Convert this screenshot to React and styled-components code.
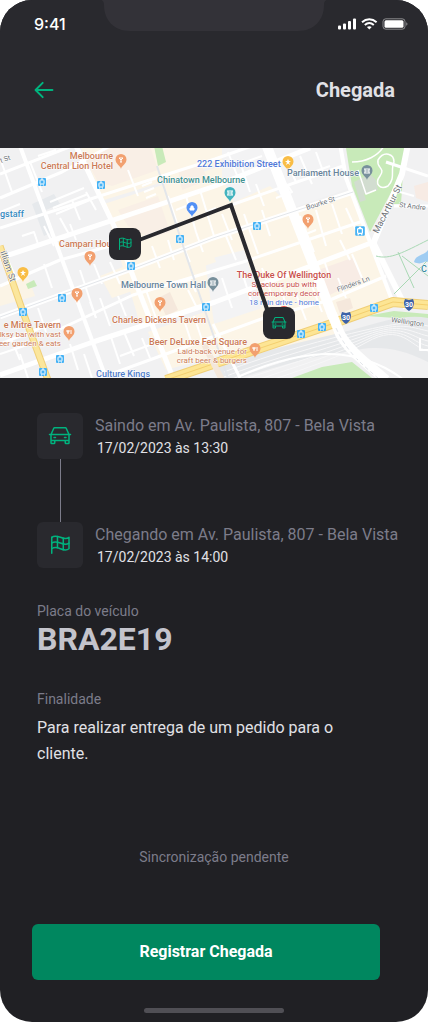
import React from "react";
import styled, { createGlobalStyle } from "styled-components";
import { PiCar } from "react-icons/pi";

const color = {
  white: "#ffffff",
  gray100: "#e1e1e6",
  gray200: "#c4c4cc",
  gray400: "#7c7c8a",
  gray700: "#29292e",
  gray800: "#202024",
  notch: "#333238",
  indicator: "#504f55",
  brandLight: "#00b37e",
  brandMid: "#00875f",
};

const GlobalStyle = createGlobalStyle`
  * { box-sizing: border-box; }
  body {
    margin: 0;
    background: ${color.white};
    font-family: Roboto, "Liberation Sans", sans-serif;
  }
  h1, h2, p, ol, dl, dd { margin: 0; padding: 0; }
`;

const Screen = styled.div`
  display: flex;
  flex-direction: column;
  min-height: 100vh;
  overflow: hidden;
  border-radius: 32px;
  background: ${color.gray800};
`;

const Header = styled.header`
  background: ${color.gray700};
`;

const StatusBar = styled.div`
  display: grid;
  grid-template-columns: 1fr 228px 1fr;
  height: 47px;
`;

const Clock = styled.time`
  align-self: center;
  padding-left: 34px;
  color: ${color.white};
  font: 500 16px/20px Inter, sans-serif;
`;

const Notch = styled.svg`
  display: block;
  width: 228px;
  height: 31px;
`;

const StatusIcons = styled.svg`
  align-self: center;
  justify-self: end;
  width: 70px;
  height: 12px;
  margin-right: 20px;
`;

const NavBar = styled.div`
  display: flex;
  align-items: center;
  justify-content: space-between;
  padding: 31px 33px 46px 32px;
`;

const BackButton = styled.button`
  display: flex;
  padding: 0;
  border: 0;
  background: none;
  color: ${color.brandLight};
  cursor: pointer;
`;

const Title = styled.h1`
  color: ${color.gray100};
  font-size: 20px;
  line-height: 24px;
  font-weight: 700;
`;

const MapView = styled.svg`
  display: block;
  width: 100%;
  height: 230px;
  background: #f1f1f2;
  font-family: Roboto, sans-serif;
`;

const Content = styled.main`
  display: flex;
  flex-direction: column;
  flex: 1;
`;

const Timeline = styled.ol`
  padding: 35px 16px 0 37px;
  list-style: none;
`;

const Stop = styled.li`
  display: flex;
  align-items: center;
  gap: 12px;
`;

const StopIcon = styled.span`
  display: flex;
  align-items: center;
  justify-content: center;
  flex: none;
  width: 46px;
  height: 46px;
  border-radius: 6px;
  background: ${color.gray700};
  color: ${color.brandLight};
`;

const Connector = styled.li`
  width: 1px;
  height: 63px;
  margin-left: 23px;
  background: ${color.gray400};
`;

const StopAddress = styled.p`
  color: ${color.gray400};
  font-size: 16px;
  line-height: 24px;
`;

const StopDate = styled.p`
  padding-left: 2px;
  color: ${color.gray100};
  font-size: 14px;
  line-height: 20px;
`;

const Details = styled.dl`
  padding: 33px 48px 0 37px;
`;

const Label = styled.dt`
  color: ${color.gray400};
  font-size: 14px;
  line-height: 20px;
`;

const Plate = styled.dd`
  && { margin-bottom: 32px; }
  color: ${color.gray200};
  font-size: 32px;
  line-height: 36px;
  font-weight: 700;
`;

const Purpose = styled.dd`
  && { margin-top: 6px; }
  color: ${color.gray100};
  font-size: 16px;
  line-height: 26px;
`;

const SyncStatus = styled.p`
  && { margin-top: 80px; }
  color: ${color.gray400};
  font-size: 14px;
  line-height: 20px;
  text-align: center;
`;

const Footer = styled.footer`
  display: flex;
  padding: 57px 48px 28px 32px;
`;

const PrimaryButton = styled.button`
  flex: 1;
  height: 56px;
  border: 0;
  border-radius: 6px;
  background: ${color.brandMid};
  color: ${color.white};
  font: 700 16px/24px Roboto, sans-serif;
  cursor: pointer;
`;

const HomeIndicator = styled.div`
  align-self: center;
  width: 140px;
  height: 5px;
  margin-bottom: 9px;
  border-radius: 3px;
  background: ${color.indicator};
`;

/* ---------- Icons ---------- */

function ArrowLeftIcon({ size, ...rest }) {
  return (
    <svg
      width={size} height={size} viewBox="0 0 256 256" fill="none" stroke="currentColor"
      strokeWidth="21" strokeLinecap="round" strokeLinejoin="round" aria-hidden="true" {...rest}
    >
      <path d="M218 128H40 M114 52L38 128L114 204" />
    </svg>
  );
}

function FlagIcon({ size, ...rest }) {
  return (
    <svg
      width={size} height={size} viewBox="0 0 256 256" fill="none" stroke="currentColor"
      strokeWidth="16" strokeLinecap="round" strokeLinejoin="round" aria-hidden="true" {...rest}
    >
      <path d="M40 216V46" />
      <path d="M40 168C104 120 160 216 224 168V46C160 94 104 -2 40 46" />
      <path d="M40 107C104 59 160 155 224 107" />
      <path d="M101 36V158 M163 57V179" />
    </svg>
  );
}

/* ---------- Map data ---------- */

const blocks = [
  ["#fcf5e7", "M80 -2 H255 L232 12 L150 38 L104 52 Z"],
  ["#fcf5e7", "M104 56 L215 20 L268 -2 L340 196 L225 215 L206 160 L140 176 Z"],
  ["#f3f3f4", "M222 0 H340 L350 40 L292 60 L270 38 L234 54 L222 30 Z"],
  ["#f3f3f4", "M205 112 L244 102 L262 160 L214 176 Z"],
  ["#fcf5e7", "M292 62 L352 42 L390 150 L330 172 Z"],
  ["#f9efe6", "M84 8 L120 -2 H150 L158 22 L112 38 L98 34 Z"],
  ["#f9efe6", "M118 62 L158 48 L170 84 L150 90 L128 78 Z"],
  ["#f8ece5", "M318 122 L352 110 L362 130 L328 148 Z"],
  ["#f9efe6", "M178 22 L200 14 L208 32 L182 42 Z"],
  ["#f5e8dc", "M158 150 L170 144 L178 162 L166 168 Z"],
  ["#f5e8dc", "M336 154 L350 150 L353 160 L340 166 Z"],
  ["#e6e9ec", "M32 56 L54 46 L60 56 L46 62 L52 84 L44 88 Z"],
  ["#fbf4e6", "M0 138 L28 128 L35 148 L0 158 Z"],
  ["#fcf5e7", "M100 128 L206 86 L216 114 L112 150 Z"],
  ["#fcf5e7", "M148 184 L210 162 L224 206 L166 222 Z"],
  ["#f7ebe4", "M414 38 L428 34 V54 L416 50 Z"],
];

const parks = [
  "M154 -2 H162 L166 14 L158 18 Z",
  "M346 0 H405 L402 24 L370 84 L352 38 Z",
  "M395 38 L403 26 L401 56 L390 56 Z",
  "M26 136 L34 132 L37 138 L28 141 Z",
  "M292 230 L322 219 L352 214 L372 230 Z",
  "M366 168 L394 163 L428 166 V177 L396 170 Z",
];

const railYard = "M218 218 C264 202 318 190 352 182 C385 173 405 166 428 170 V214 C392 196 372 198 340 205 C296 211 262 224 240 230 H222 Z";
const rails = [0, 5, 10, 15, 20, 25];

const streets = [
  [5, "M0 110 L215 38 L310 0"],
  [3, "M0 80 L215 11 L252 -2"],
  [3, "M0 50 L62 24 L110 -2"],
  [3, "M132 94 L231 57 L343 18"],
  [5, "M0 169 L60 147 L132 121 L213 90 L353 44"],
  [3, "M0 26 L72 -2"],
  [3, "M0 138 L60 112 L110 98"],
  [3, "M60 181 L133 147 L243 114 L363 73"],
  [5, "M0 227 L90 195 L215 154 L316 116 L376 93"],
  [3, "M0 196 L60 172"],
  [3, "M100 230 L166 206 L264 170 L330 152"],
  [3, "M330 152 L386 128"],
  [4, "M20 -2 L63 114 L106 230"],
  [5, "M76 -2 L115 80 L133 128 L173 230"],
  [10, "M266 -4 L313 116 L334 172"],
  [4, "M340 -4 L346 30 L376 110 L392 152"],
  [6, "M408 -4 L402 26 L373 96"],
  [3, "M386 14 L428 28"],
  [3, "M394 58 H428"],
  [3, "M213 176 L240 230"],
  [6, "M374 96 L406 160"],
  [2, "M0 10 L12 44"],
];

const alleys = [
  "M50 54 L84 40", "M53 60 L88 46", "M56 66 L90 52", "M72 52 L80 72", "M60 70 L70 88",
  "M86 44 L96 62", "M22 88 L34 84 L38 96", "M44 78 L54 98", "M70 76 L76 92", "M128 22 L138 48",
  "M142 38 L152 34", "M144 44 L154 40", "M146 50 L156 46", "M168 48 L178 78", "M176 62 L186 58",
  "M186 48 L196 84", "M200 42 L214 88", "M206 64 L216 60", "M196 84 L203 104", "M222 66 L232 92",
  "M152 98 L160 120", "M168 92 L174 112", "M182 96 L190 114", "M226 88 L236 112", "M244 66 L258 106",
  "M262 62 L270 88", "M228 4 L238 30", "M240 16 L262 8", "M242 20 L250 44", "M256 36 L264 58",
  "M276 50 L292 44 L288 38", "M286 12 L296 34", "M300 8 L312 36", "M316 4 L324 26", "M302 28 L330 18",
  "M300 68 L314 104", "M316 62 L326 98", "M332 56 L342 86", "M346 60 L356 82", "M306 86 L316 82",
  "M312 138 L322 164", "M338 130 L346 150", "M352 106 L362 130", "M340 92 L350 112", "M324 112 L330 130",
  "M280 138 L292 176", "M296 146 L306 172", "M222 130 L232 160", "M242 124 L252 156", "M262 120 L272 148",
  "M44 116 L52 140", "M80 122 L96 170", "M94 116 L102 136", "M110 114 L120 136", "M38 160 L46 184",
  "M100 150 L110 178", "M90 154 L96 170", "M118 148 L126 168", "M146 142 L156 170", "M176 136 L190 132 L196 144",
  "M188 142 L198 162", "M70 196 L78 222", "M84 206 L92 230", "M20 206 L28 230", "M10 188 L20 212",
  "M110 186 L120 216", "M124 184 L134 208", "M142 190 L150 210", "M184 172 L192 196", "M194 168 L202 192",
  "M0 206 L30 196", "M120 208 L158 194", "M8 112 L16 130", "M30 14 L42 44", "M38 8 L56 2",
  "M400 28 L400 44 L414 48", "M420 190 V202 H428", "M0 64 L20 56",
];

const parkPaths = [
  "M352 14 C366 14 378 8 384 -2",
  "M378 12 C384 2 394 6 394 14 C390 22 396 30 388 38 C380 42 374 36 380 28 C386 20 376 20 378 12 Z",
  "M358 22 L366 46 L376 42",
];

const trams = [
  [42, 34], [101, 37], [180, 91], [131, 118], [257, 78], [62, 150], [23, 164],
  [60, 211], [43, 224], [206, 159], [301, 186], [322, 179], [374, 160],
];

const ORANGE = "#f2a06f";
const pins = [
  [121, 12, ORANGE, "bar"], [90, 109, ORANGE, "bar"], [77, 146, ORANGE, "bar"], [160, 155, ORANGE, "bar"],
  [308, 72, ORANGE, "bar"], [69, 184, ORANGE, "food"], [255, 201, ORANGE, "food"],
  [288, 14, "#f9bd45", "star"], [23, 125, "#f9bd45", "star"], [192, 60, "#5290f5", "lock"],
  [230, 45, "#42b3bf", "gate"], [367, 23, "#78909c", "gate"], [213, 135, "#78909c", "gate"],
];

const FOOD = "#cb7a55";
const RED = "#c9504a";
const SLATE = "#67839a";
const BLUE = "#5179d8";
const places = [
  { x: 113, y: 11, a: "end", c: FOOD, t: "Melbourne" },
  { x: 113, y: 21, a: "end", c: FOOD, t: "Central Lion Hotel" },
  { x: 197, y: 19, c: BLUE, t: "222 Exhibition Street" },
  { x: 157, y: 35, c: "#43908f", t: "Chinatown Melbourne" },
  { x: 287, y: 28, c: SLATE, t: "Parliament House" },
  { x: 0, y: 69, c: "#3589c0", t: "gstaff" },
  { x: 59, y: 99, c: FOOD, t: "Campari House" },
  { x: 121, y: 140, c: SLATE, t: "Melbourne Town Hall" },
  { x: 112, y: 175, c: FOOD, t: "Charles Dickens Tavern" },
  { x: 61, y: 180, a: "end", c: FOOD, t: "e Mitre Tavern" },
  { x: 61, y: 189, a: "end", c: FOOD, s: 8, t: "lksy bar with vast" },
  { x: 61, y: 198, a: "end", c: FOOD, s: 8, t: "eer garden & eats" },
  { x: 247, y: 197, a: "end", c: FOOD, t: "Beer DeLuxe Fed Square" },
  { x: 247, y: 206, a: "end", c: FOOD, s: 8, t: "Laid-back venue for" },
  { x: 247, y: 215, a: "end", c: FOOD, s: 8, t: "craft beer & burgers" },
  { x: 96, y: 229, c: "#4f7cc8", t: "Culture Kings" },
  { x: 284, y: 130, a: "middle", c: RED, t: "The Duke Of Wellington" },
  { x: 284, y: 139, a: "middle", c: RED, s: 8, t: "Spacious pub with" },
  { x: 284, y: 148, a: "middle", c: RED, s: 8, t: "contemporary decor" },
  { x: 284, y: 157, a: "middle", c: BLUE, s: 8, t: "18 min drive - home" },
  { x: 421, y: 124, c: "#3589a0", t: "C" },
];

const roadNames = [
  { x: 1, y: 15, r: -20, s: 7, t: "t St" },
  { x: 0, y: 104, r: 71, s: 9, t: "illiam St" },
  { x: 307, y: 62, r: -18, s: 7, t: "Bourke St" },
  { x: 378, y: 86, r: -63, s: 9, t: "MacArthur St" },
  { x: 399, y: 59, r: 7, s: 7, t: "St Andre" },
  { x: 338, y: 144, r: -20, s: 7, t: "Flinders Ln" },
  { x: 391, y: 174, r: 8, s: 7, t: "Wellington" },
];

const glyphs = {
  bar: <path d="M-2 -2 H2 L0 0 Z M0 0 V2 M-1 2 H1" />,
  food: <path d="M-1 -2 V2 M-2 -2 V0 H0 V-2 M2 2 V-2" />,
  star: <path fill="#fff" stroke="none" d="M0 -3 L1 -1 L3 -1 L1 .6 L2 3 L0 1.4 L-2 3 L-1 .6 L-3 -1 L-1 -1 Z" />,
  lock: <path fill="#fff" d="M-2 0 H2 V2 H-2 Z M-1 0 V-2 H1 V0" />,
  gate: <path d="M-3 -2 H3 M-2 0 H2 M-2 -2 V2 M2 -2 V2 M-3 2 H3" />,
};

function PlacePin({ x, y, fill, glyph }) {
  return (
    <g transform={`translate(${x} ${y})`}>
      <path fill={fill} d="M0 9 C-.6 5.500 -5.500 4 -5.500 -.5 A5.500 5.500 0 0 1 5.500 -.5 C5.500 4 .6 5.500 0 9 Z" />
      <g fill="none" stroke="#fff" strokeWidth="1">{glyphs[glyph]}</g>
    </g>
  );
}

function TramStop({ x, y, big }) {
  return (
    <g transform={`translate(${x} ${y}) scale(${big ? 1.2 : 1})`}>
      <rect x="-4" y="-4" width="8" height="8" rx="1" fill="#45b2f5" />
      <rect x="-2" y="-2" width="4" height="4" rx=".6" fill="none" stroke="#fff" />
      <path d="M-1 -3 H1 M-2 3 H-1 M1 3 H2" stroke="#fff" />
    </g>
  );
}

function RouteShield({ x, y }) {
  return (
    <g transform={`translate(${x} ${y})`}>
      <path d="M-4 -6 L0 -5 L4 -6 L5 -3 C5 2 3 4 0 6 C-3 4 -5 2 -5 -3 Z" fill="#3c61a8" />
      <text y="2" textAnchor="middle" fontSize="7" fontWeight="700" fill="#fff">30</text>
    </g>
  );
}

function RouteMarker({ x, y, Icon }) {
  return (
    <g>
      <rect x={x} y={y} width="32" height="32" rx="8" fill={color.gray700} />
      <Icon x={x + 8} y={y + 8} size={16} color={color.brandLight} />
    </g>
  );
}

function RouteMap() {
  return (
    <MapView viewBox="0 0 428 230" preserveAspectRatio="xMidYMid slice" role="img" aria-label="Mapa do trajeto">
      {blocks.map(([fill, d]) => <path key={d} d={d} fill={fill} />)}
      {parks.map((d) => <path key={d} d={d} fill="#c8eab9" />)}
      <path d="M354 34 L362 30 L370 26 L376 32 L378 42 L364 46 L366 52 L360 54 Z" fill="#d2ddd0" />
      <path d={railYard} fill="#e6e8ea" />
      <g fill="none" stroke="#f7f7f8" strokeWidth="1">
        {rails.map((n) => (
          <path key={n} d={`M224 ${224 + n} C270 ${206 + n} 330 ${190 + n} 366 ${182 + n / 2} S410 ${174 + n} 428 ${178 + n}`} />
        ))}
      </g>
      <g fill="none" stroke="#fff" strokeLinejoin="round">
        <g strokeWidth="2">{alleys.map((d) => <path key={d} d={d} />)}</g>
        {streets.map(([w, d]) => <path key={d} d={d} strokeWidth={w} />)}
        <g strokeWidth="1.500">{parkPaths.map((d) => <path key={d} d={d} />)}</g>
      </g>
      <g fill="none" stroke="#e3e6ea">
        <path d="M0 169 L60 147 L132 121 L213 90 L353 44" />
        <path d="M157 18 L187 110 L228 230" strokeWidth="2" />
      </g>
      <g fill="none" stroke="#a9d8b4">
        <path d="M376 108 C390 112 404 104 428 92 M398 104 L414 140 M394 146 L428 112 M402 108 L428 128" />
      </g>
      <path d="M414 114 C416 106 424 108 428 102 V114 C424 112 422 118 414 114 Z" fill="#9fccf2" />
      <g fill="none" strokeLinejoin="round">
        <path d="M0 98 L23 164 L48 232" stroke="#f0cf78" strokeWidth="7" />
        <path d="M0 98 L23 164 L48 232" stroke="#fbe69c" strokeWidth="5" />
        <path d="M166 232 L213 216 L323 179 L393 154 L428 157" stroke="#f0cf78" strokeWidth="10" />
        <path d="M166 232 L213 216 L323 179 L393 154 L428 157" stroke="#fde594" strokeWidth="8" />
        <path d="M166 232 L213 216 L323 179 L393 154 L428 157" stroke="#f3cf70" strokeWidth="1" />
        <path d="M332 166 L340 186 C350 204 368 216 386 232" stroke="#fff" strokeWidth="10" />
        <path d="M336 180 C348 206 362 216 380 232" stroke="#e3e6ea" strokeDasharray="4 3" />
        <path d="M240 228 C280 210 320 202 350 208 S396 226 404 232" stroke="#fff" strokeWidth="2" />
        <path d="M204 196 L222 232" stroke="#f3e7da" strokeWidth="6" />
      </g>

      {trams.map(([x, y]) => <TramStop key={`${x}-${y}`} x={x} y={y} />)}
      <TramStop x={360} y={83} big />
      <RouteShield x={346} y={170} />
      <RouteShield x={409} y={157} />
      {pins.map(([x, y, fill, glyph]) => <PlacePin key={`${x}-${y}`} x={x} y={y} fill={fill} glyph={glyph} />)}
      <circle cx="284" cy="165" r="7" fill="#e04a3f" />

      <g fill="#6b7075" stroke="#fff" strokeWidth="1" paintOrder="stroke" strokeLinejoin="round">
        {roadNames.map((n) => (
          <text key={n.t} transform={`translate(${n.x} ${n.y}) rotate(${n.r})`} fontSize={n.s}>{n.t}</text>
        ))}
      </g>
      <g stroke="#fff" strokeWidth="1" paintOrder="stroke" strokeLinejoin="round">
        {places.map((p) => (
          <text key={p.t} x={p.x} y={p.y} textAnchor={p.a || "start"} fill={p.c} fontSize={p.s || 9} fontWeight={p.s ? 400 : 500}>
            {p.t}
          </text>
        ))}
      </g>

      <path d="M139 92 L231 57 L268 164" fill="none" stroke={color.gray700} strokeWidth="4" />
      <RouteMarker x={109} y={80} Icon={FlagIcon} />
      <RouteMarker x={263} y={159} Icon={PiCar} />
    </MapView>
  );
}

function TimelineStop({ Icon, address, date }) {
  return (
    <Stop>
      <StopIcon><Icon size={24} /></StopIcon>
      <div>
        <StopAddress>{address}</StopAddress>
        <StopDate>{date}</StopDate>
      </div>
    </Stop>
  );
}

export default function App() {
  return (
    <>
      <GlobalStyle />
      <Screen>
        <Header>
          <StatusBar>
            <Clock>9:41</Clock>
            <Notch viewBox="0 0 228 31" aria-hidden="true">
              <path d="M0 0 H228 C225 0 224 2 224 5 C224 20 214 31 198 31 H30 C14 31 4 20 4 5 C4 2 3 0 0 0 Z" fill={color.notch} />
            </Notch>
            <StatusIcons viewBox="0 0 70 12" aria-hidden="true">
              <g fill="#fff">
                <rect x="0" y="7.500" width="3" height="4" rx="1" />
                <rect x="5" y="5.500" width="3" height="6" rx="1" />
                <rect x="10" y="3" width="3" height="8.500" rx="1" />
                <rect x="15" y="0.500" width="3" height="11" rx="1" />
              </g>
              <g fill="none" stroke="#fff" strokeWidth="2">
                <path d="M24 4.200 C28.300 .4 34.300 .4 38.600 4.200" />
                <path d="M26.800 7 C29.500 4.700 33.100 4.700 35.800 7" />
              </g>
              <path d="M31.300 11.500 L28.900 9.100 C30.300 7.900 32.300 7.900 33.700 9.100 Z" fill="#fff" />
              <rect x="45" y=".8" width="22" height="10.400" rx="2.800" fill="none" stroke="#fff" strokeOpacity=".45" />
              <rect x="46.500" y="2.200" width="19" height="7.600" rx="1.500" fill="#fff" />
              <path d="M68.300 4.200 C69.800 4.800 69.800 7.200 68.300 7.800 Z" fill="#fff" fillOpacity=".5" />
            </StatusIcons>
          </StatusBar>
          <NavBar>
            <BackButton type="button" aria-label="Voltar"><ArrowLeftIcon size={24} /></BackButton>
            <Title>Chegada</Title>
          </NavBar>
        </Header>
        <RouteMap />
        <Content>
          <Timeline>
            <TimelineStop Icon={PiCar} address="Saindo em Av. Paulista, 807 - Bela Vista" date="17/02/2023 às 13:30" />
            <Connector aria-hidden="true" />
            <TimelineStop Icon={FlagIcon} address="Chegando em Av. Paulista, 807 - Bela Vista" date="17/02/2023 às 14:00" />
          </Timeline>
          <Details>
            <Label>Placa do veículo</Label>
            <Plate>BRA2E19</Plate>
            <Label>Finalidade</Label>
            <Purpose>Para realizar entrega de um pedido para o cliente.</Purpose>
          </Details>
          <SyncStatus>Sincronização pendente</SyncStatus>
          <Footer>
            <PrimaryButton type="button">Registrar Chegada</PrimaryButton>
          </Footer>
          <HomeIndicator />
        </Content>
      </Screen>
    </>
  );
}
